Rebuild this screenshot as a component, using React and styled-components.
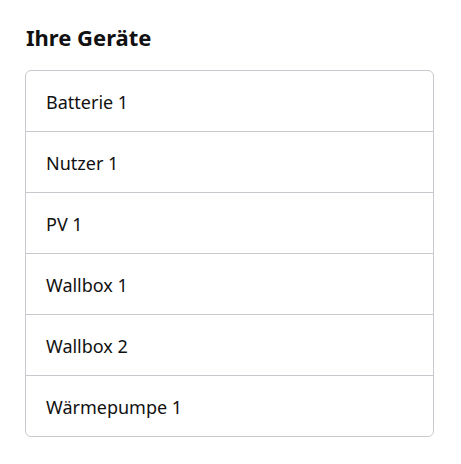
import React from "react";
import styled, { createGlobalStyle } from "styled-components";

const GlobalStyle = createGlobalStyle`
    body {
        margin: 0;
        background: #ffffff;
        font-family: "Noto Sans", "Open Sans", sans-serif;
        color: #111111;
    }
`;

const Page = styled.main`
    padding: 21px 27px 0 25px;
`;

const Title = styled.h2`
    margin: 0 0 17px 1px;
    font-size: 22px;
    font-weight: 700;
    line-height: 32px;
`;

const DeviceList = styled.ul`
    list-style: none;
    margin: 0;
    padding: 0;
    border: 1px solid #c8c9ce;
    border-radius: 6px;
`;

const DeviceItem = styled.li`
    display: flex;
    align-items: center;
    height: 60px;
    padding: 2px 20px 0;
    box-sizing: border-box;
    font-size: 18px;
    & + & {
        border-top: 1px solid #c8c9ce;
        height: 61px;
    }
`;

const devices = ["Batterie 1", "Nutzer 1", "PV 1", "Wallbox 1", "Wallbox 2", "Wärmepumpe 1"];

export default function App() {
    return (
        <>
            <GlobalStyle />
            <Page>
                <Title>Ihre Geräte</Title>
                <DeviceList>
                    {devices.map((name) => (
                        <DeviceItem key={name}>{name}</DeviceItem>
                    ))}
                </DeviceList>
            </Page>
        </>
    );
}
